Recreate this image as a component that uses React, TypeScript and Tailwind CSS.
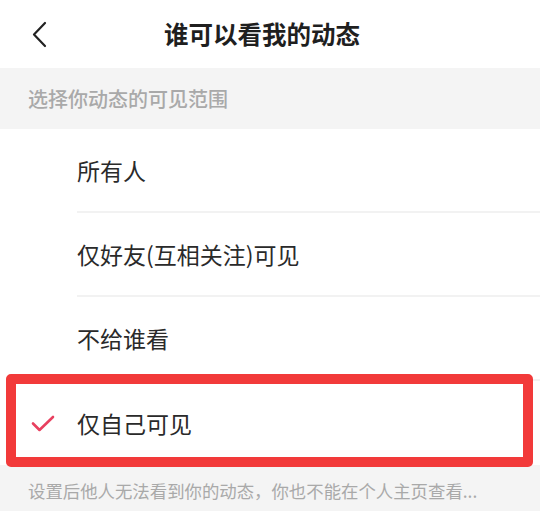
import React from 'react';

const font = { fontFamily: '"Noto Sans CJK SC", "Noto Sans", sans-serif' };

export default function App() {
  const options = ['所有人', '仅好友(互相关注)可见', '不给谁看'];
  return (
    <div className="w-[540px] h-[511px] bg-white overflow-hidden" style={font}>
      {/* Header */}
      <div className="relative h-[68px] flex items-center justify-center pr-[16px]">
        <svg className="absolute left-[31px] top-[21px]" width="18" height="28" viewBox="0 0 18 28" fill="none">
          <path d="M14 2L3 13.5L14 25" stroke="#222" strokeWidth="2.2" strokeLinecap="round" strokeLinejoin="round" />
        </svg>
        <h1 className="text-[24.5px] font-bold text-[#1f1f1f] leading-none">谁可以看我的动态</h1>
      </div>

      {/* Section title */}
      <div className="h-[61px] bg-[#f4f4f4] flex items-center pl-[28px]">
        <span className="text-[20px] font-medium text-[#a9a9a9] leading-none">选择你动态的可见范围</span>
      </div>

      {/* Options */}
      <div>
        {options.map((o) => (
          <div key={o} className="h-[84px] ml-[77px] flex items-center border-b-2 border-[#f2f2f2]">
            <span className="text-[23px] text-[#2a2a2a] leading-none">{o}</span>
          </div>
        ))}
        <div className="relative h-[84px] flex items-center">
          <svg className="absolute left-[31px] top-[34px]" width="24" height="18" viewBox="0 0 24 18" fill="none">
            <path d="M2 8.5L8.5 15L22 2" stroke="#e8405f" strokeWidth="2.6" strokeLinecap="round" strokeLinejoin="round" />
          </svg>
          <span className="ml-[77px] text-[23px] text-[#2a2a2a] leading-none">仅自己可见</span>
          <div className="absolute left-[6px] right-[7px] top-[-7px] bottom-[-2px] border-[10px] border-[#f23a3a] rounded-[5px] z-10" />
        </div>
      </div>

      {/* Footer note */}
      <div className="bg-[#f4f4f4] h-[60px] pl-[28px] pt-[14px]">
        <span className="text-[17.4px] text-[#a9a9a9] leading-none whitespace-nowrap">设置后他人无法看到你的动态，你也不能在个人主页查看...</span>
      </div>
    </div>
  );
}
